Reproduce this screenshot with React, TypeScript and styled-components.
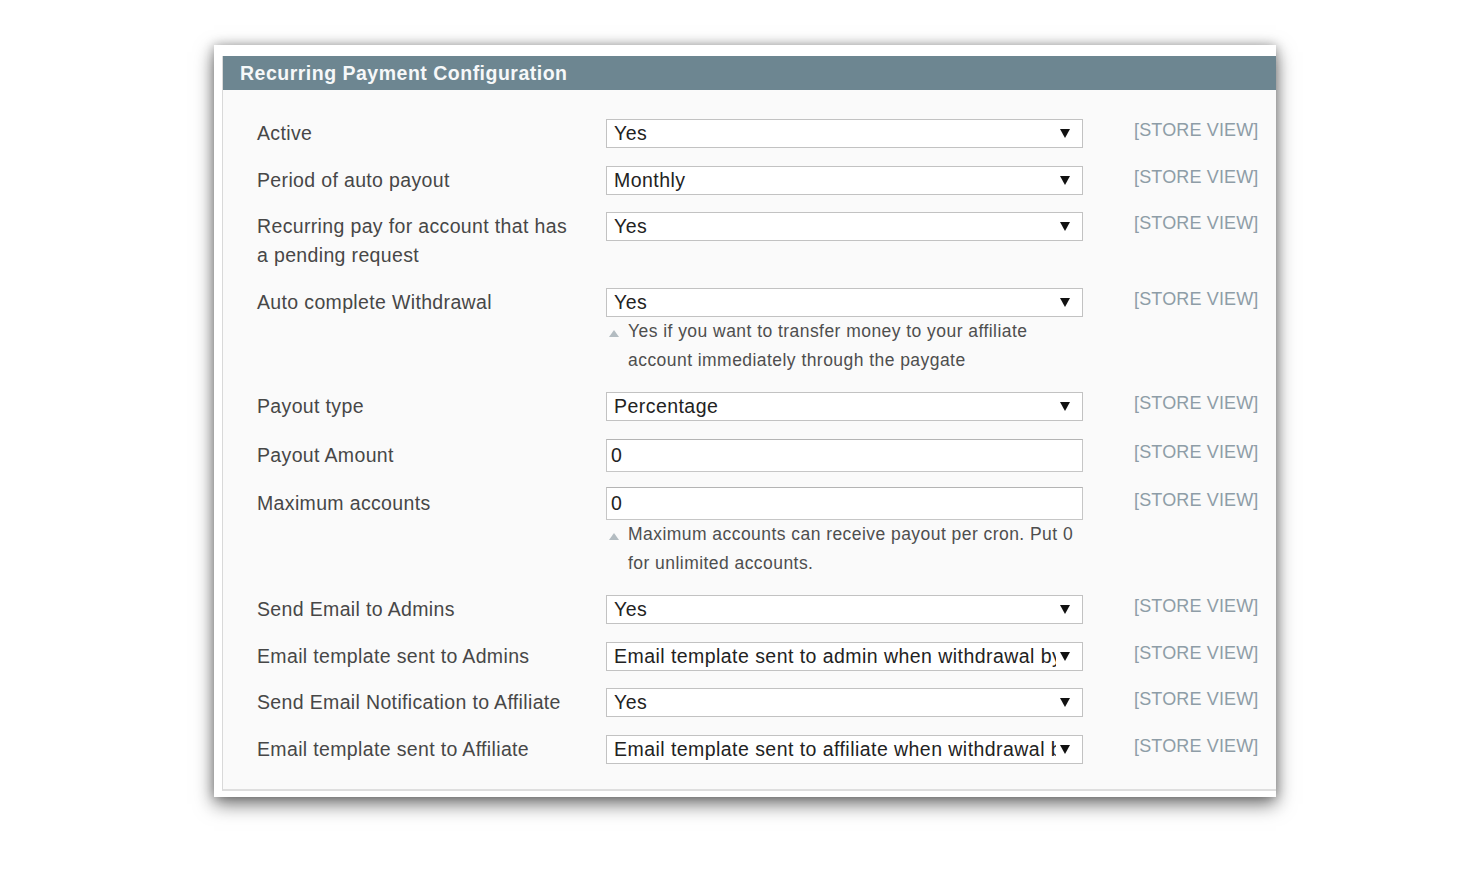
import React from "react";
import styled, { createGlobalStyle } from "styled-components";

const Global = createGlobalStyle`
  html, body { margin: 0; padding: 0; background: #ffffff; }
  body { font-family: "Liberation Sans", Arial, sans-serif; }
  #root { width: 1473px; height: 879px; overflow: hidden; }
`;

const Page = styled.div`
  width: 1473px;
  height: 879px;
  padding: 45px 0 0 214px;
  box-sizing: border-box;
`;

const Card = styled.div`
  width: 1062px;
  background: #ffffff;
  padding: 11px 0 6px 8px;
  box-sizing: border-box;
  box-shadow: 0 7px 18px rgba(0, 0, 0, 0.55), 0 0 10px rgba(0, 0, 0, 0.25);
`;

const Panel = styled.section`
  background: #fafafa;
  border-left: 1px solid #d9d9d9;
  border-bottom: 2px solid #dedede;
`;

const Header = styled.h2`
  margin: 0;
  height: 34px;
  display: flex;
  align-items: center;
  padding-left: 17px;
  background: #6d8691;
  color: #f6f8f9;
  font-size: 19.5px;
  font-weight: bold;
  letter-spacing: 0.5px;
`;

const Body = styled.div`
  padding: 29px 0 8px 34px;
`;

const Row = styled.div<{ $gap: number }>`
  display: grid;
  grid-template-columns: 349px 477px 1fr;
  align-items: start;
  margin-bottom: ${(p) => p.$gap}px;
`;

const Label = styled.div<{ $h: number }>`
  color: #474747;
  font-size: 19.5px;
  letter-spacing: 0.35px;
  line-height: 29px;
  padding-top: ${(p) => (p.$h - 29) / 2}px;
  padding-right: 12px;
`;

const Value = styled.div`
  display: flex;
  flex-direction: column;
`;

const SelectBox = styled.div`
  height: 29px;
  box-sizing: border-box;
  border: 1px solid #c2c2c2;
  background: #ffffff;
  display: flex;
  align-items: center;
  padding: 0 12px 0 7px;
  font-size: 19.5px;
  letter-spacing: 0.45px;
  color: #222222;
`;

const SelectText = styled.span`
  flex: 1;
  overflow: hidden;
  white-space: nowrap;
`;

const Arrow = styled.svg`
  width: 10px;
  height: 9px;
  margin-left: 4px;
  flex: none;
`;

const InputBox = styled.div`
  height: 33px;
  box-sizing: border-box;
  border: 1px solid #c6c6c6;
  border-top-color: #b4b4b4;
  background: #ffffff;
  display: flex;
  align-items: center;
  padding-left: 4px;
  font-size: 19.5px;
  color: #222222;
`;

const Note = styled.div`
  display: flex;
  padding-left: 3px;
`;

const NoteMark = styled.span`
  flex: none;
  width: 0;
  height: 0;
  margin: 13px 9px 0 0;
  border-left: 5px solid transparent;
  border-right: 5px solid transparent;
  border-bottom: 7px solid #b3bcc1;
`;

const NoteLines = styled.div`
  color: #4e4e4e;
  font-size: 17.5px;
  line-height: 29px;
  letter-spacing: 0.45px;
`;

const NoteLine = styled.span`
  display: block;
  white-space: nowrap;
`;

const Scope = styled.div<{ $h: number }>`
  padding-left: 51px;
  color: #8e9da7;
  font-size: 18px;
  letter-spacing: 0.15px;
  line-height: 29px;
  margin-top: ${(p) => (p.$h - 29) / 2 - 3}px;
  white-space: nowrap;
`;

type Field = {
  label: React.ReactNode;
  kind: "select" | "input";
  value: string;
  note?: string[];
  gap?: number;
};

const fields: Field[] = [
  { label: "Active", kind: "select", value: "Yes" },
  { label: "Period of auto payout", kind: "select", value: "Monthly" },
  {
    label: (
      <>
        Recurring pay for account that has
        <br />a pending request
      </>
    ),
    kind: "select",
    value: "Yes",
  },
  {
    label: "Auto complete Withdrawal",
    kind: "select",
    value: "Yes",
    note: [
      "Yes if you want to transfer money to your affiliate",
      "account immediately through the paygate",
    ],
  },
  { label: "Payout type", kind: "select", value: "Percentage" },
  { label: "Payout Amount", kind: "input", value: "0", gap: 15 },
  {
    label: "Maximum accounts",
    kind: "input",
    value: "0",
    note: [
      "Maximum accounts can receive payout per cron. Put 0",
      "for unlimited accounts.",
    ],
  },
  { label: "Send Email to Admins", kind: "select", value: "Yes" },
  {
    label: "Email template sent to Admins",
    kind: "select",
    value: "Email template sent to admin when withdrawal by cron",
  },
  { label: "Send Email Notification to Affiliate", kind: "select", value: "Yes" },
  {
    label: "Email template sent to Affiliate",
    kind: "select",
    value: "Email template sent to affiliate when withdrawal by cron",
  },
];

export default function App() {
  return (
    <>
      <Global />
      <Page>
        <Card>
          <Panel>
            <Header>Recurring Payment Configuration</Header>
            <Body>
              {fields.map((f, i) => {
                const h = f.kind === "select" ? 29 : 33;
                const last = i === fields.length - 1;
                return (
                  <Row key={i} $gap={last ? 17 : f.gap ?? 17.5}>
                    <Label $h={h}>{f.label}</Label>
                    <Value>
                      {f.kind === "select" ? (
                        <SelectBox>
                          <SelectText>{f.value}</SelectText>
                          <Arrow viewBox="0 0 10 9">
                            <path d="M0 0 H10 L5 9 Z" fill="#111" />
                          </Arrow>
                        </SelectBox>
                      ) : (
                        <InputBox>{f.value}</InputBox>
                      )}
                      {f.note && (
                        <Note>
                          <NoteMark />
                          <NoteLines>
                            {f.note.map((l, j) => (
                              <NoteLine key={j}>{l}</NoteLine>
                            ))}
                          </NoteLines>
                        </Note>
                      )}
                    </Value>
                    <Scope $h={h}>[STORE VIEW]</Scope>
                  </Row>
                );
              })}
            </Body>
          </Panel>
        </Card>
      </Page>
    </>
  );
}
